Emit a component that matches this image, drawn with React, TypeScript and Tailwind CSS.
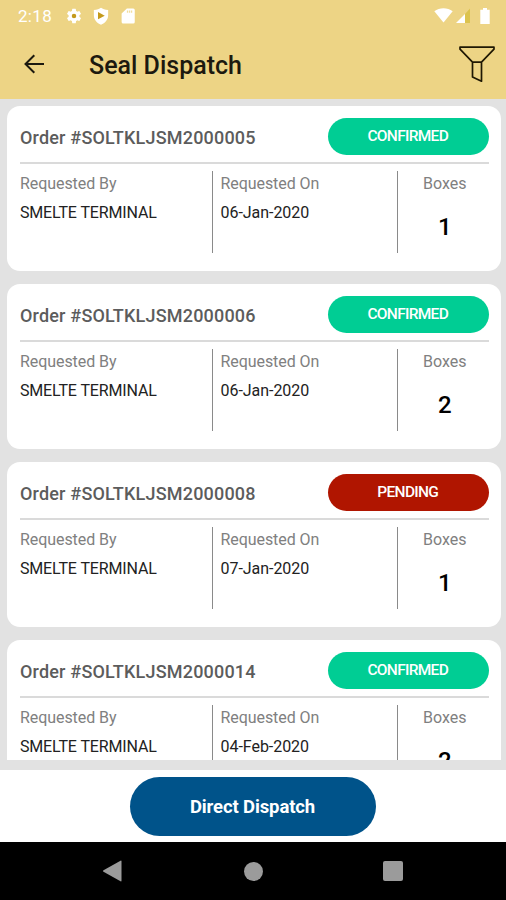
import clsx from "clsx";

type Order = {
  id: string;
  status: "CONFIRMED" | "PENDING";
  by: string;
  date: string;
  boxes: number;
};

const orders: Order[] = [
  { id: "SOLTKLJSM2000005", status: "CONFIRMED", by: "SMELTE TERMINAL", date: "06-Jan-2020", boxes: 1 },
  { id: "SOLTKLJSM2000006", status: "CONFIRMED", by: "SMELTE TERMINAL", date: "06-Jan-2020", boxes: 2 },
  { id: "SOLTKLJSM2000008", status: "PENDING", by: "SMELTE TERMINAL", date: "07-Jan-2020", boxes: 1 },
  { id: "SOLTKLJSM2000014", status: "CONFIRMED", by: "SMELTE TERMINAL", date: "04-Feb-2020", boxes: 2 },
];

const StatusBar = () => {
  return (
    <div className="flex h-[31px] items-center justify-between pl-[18px] pr-[16px] text-white">
      <div className="flex items-center">
        <span className="w-[47px] text-[17px] leading-8 tracking-[0.3px]">2:18</span>
        {/* Settings */}
        <svg className="mr-[9px] h-[18px] w-[18px]" viewBox="0 0 24 24">
          <circle cx="12" cy="12" r="4" fill="#c49a1c" />
          <path
            fill="currentColor"
            d="M19.14 12.94c.04-.3.06-.61.06-.94s-.02-.64-.07-.94l2.03-1.58a.49.49 0 0 0 .12-.61l-1.92-3.32a.49.49 0 0 0-.59-.22l-2.39.96a7 7 0 0 0-1.62-.94l-.36-2.54a.48.48 0 0 0-.48-.41h-3.84a.47.47 0 0 0-.47.41l-.36 2.54c-.59.24-1.13.57-1.62.94l-2.39-.96a.48.48 0 0 0-.59.22L2.74 8.87a.47.47 0 0 0 .12.61l2.03 1.58a6.6 6.6 0 0 0 0 1.88l-2.03 1.58a.49.49 0 0 0-.12.61l1.92 3.32c.12.22.37.29.59.22l2.39-.96c.5.38 1.03.7 1.62.94l.36 2.54c.05.24.24.41.48.41h3.84c.24 0 .44-.17.47-.41l.36-2.54a7 7 0 0 0 1.62-.94l2.39.96c.22.08.47 0 .59-.22l1.92-3.32a.47.47 0 0 0-.12-.61zM12 15a3 3 0 1 1 0-6 3 3 0 0 1 0 6"
          />
        </svg>
        {/* Play protect */}
        <svg className="mr-[9px] h-[18px] w-[18px]" viewBox="0 0 24 24">
          <path fill="currentColor" d="M12 1c2 1.400 5.500 2.500 9.500 3v7c0 6-4 10.500-9.500 12.500C6.500 21.500 2.500 17 2.500 11V4c4-.5 7.500-1.600 9.500-3z" />
          <path fill="#c49a1c" d="M8 6.800v9.400L17 11.500z" />
        </svg>
        {/* SD card */}
        <svg className="h-[18px] w-[18px]" viewBox="0 0 24 24">
          <path fill="currentColor" d="M19 2h-8.500L3.500 8.500V20a2 2 0 0 0 2 2H19a2 2 0 0 0 2-2V4a2 2 0 0 0-2-2z" />
          <path fill="#edd485" fillOpacity=".8" d="M10.500 4.800h1.700v3h-1.700zM13.200 4.800h1.700v3h-1.700zM15.900 4.800h1.700v3h-1.700z" />
        </svg>
      </div>
      <div className="flex items-center">
        <svg className="mr-[3px] h-[15px] w-[19px]" viewBox="0 0 19 15">
          <path fill="currentColor" d="M9.500 14.500.3 3.300C5.500-.7 13.500-.7 18.700 3.300z" />
        </svg>
        <svg className="mr-[9px] h-[15px] w-[15px]" viewBox="0 0 15 15">
          <path fill="#dcc34e" d="M14 .5V15H9V6z" />
          <path fill="currentColor" d="M9 6v9H0z" />
        </svg>
        <svg className="h-[16px] w-[10px]" viewBox="0 0 10 16">
          <path fill="currentColor" d="M3 0h4v1.800h2.700V16H.3V1.800H3z" />
        </svg>
      </div>
    </div>
  );
};

const Header = () => {
  return (
    <header className="h-[99px] shrink-0 bg-[#edd485]">
      <StatusBar />
      <div className="flex h-[66px] items-center pl-[24px] pr-[11px]">
        <svg className="h-[20px] w-[21px] text-[#1c190f]" viewBox="0 0 21 20" fill="none" stroke="currentColor" strokeWidth="2">
          <path d="M20 10H1.800M10.300 1.200 1.500 10l8.800 8.800" />
        </svg>
        <h1 className="ml-[44px] flex-1 pt-[3px] text-[25px] font-medium text-[#1c190f]">Seal Dispatch</h1>
        <svg className="h-[37px] w-[36px]" viewBox="0 0 36 37" fill="none" stroke="#1f1803" strokeWidth="1.700" strokeLinejoin="round">
          <path d="M1 1.200h34v2L22.500 16.200v19L13.500 31V16.200L1 3.200zM13.500 16.200h9" />
        </svg>
      </div>
    </header>
  );
};

const OrderCard = ({ order }: { order: Order }) => {
  return (
    <article className="mb-[12.500px] h-[165.500px] shrink-0 rounded-[13px] bg-white px-[12.500px] pt-[12.500px]">
      <div className="flex h-[45.500px] items-start justify-between border-b-2 border-[#dadada]">
        <h2 className="pt-px text-[18px] font-medium leading-[38px] tracking-[0.2px] text-[#5c5c5c]">Order #{order.id}</h2>
        <span
          className={clsx(
            "h-[37px] w-[160.500px] rounded-full pr-px text-center text-[15.500px] font-medium leading-[37px] tracking-[-0.7px] text-white",
            order.status === "CONFIRMED" ? "bg-[#00cd94]" : "bg-[#b01500]"
          )}
        >
          {order.status}
        </span>
      </div>

      <div className="mt-[7.500px] flex h-[82px] text-[16px] leading-[24px] text-[#222]">
        <div className="w-[193.200px] border-r-[1.500px] border-[#8a8a8a] pt-px">
          <p className="tracking-[-0.05px] text-[#808080]">Requested By</p>
          <p className="mt-[5px] tracking-[-0.12px]">{order.by}</p>
        </div>
        <div className="w-[185px] border-r-[1.500px] border-[#8a8a8a] pl-[7.500px] pt-px">
          <p className="tracking-[-0.08px] text-[#808080]">Requested On</p>
          <p className="mt-[5px] tracking-[-0.05px]">{order.date}</p>
        </div>
        <div className="flex-1 pl-[3px] pt-px text-center">
          <p className="text-[#808080]">Boxes</p>
          <p className="mt-[16px] text-[24px] font-medium leading-[30px] text-black">{order.boxes}</p>
        </div>
      </div>
    </article>
  );
};

const NavBar = () => {
  return (
    <nav className="flex h-[58px] shrink-0 items-center bg-black pl-[102px]">
      <svg className="h-[22px] w-[20px]" viewBox="0 0 20 22">
        <path fill="#9b9b9b" d="M1.500 10.200 18.500.7q1-.5 1 .7v19.200q0 1.200-1 .7L1.500 11.800q-1.200-.8 0-1.600z" />
      </svg>
      <span className="ml-[122px] h-[19px] w-[19px] rounded-full bg-[#9b9b9b]" />
      <span className="ml-[120px] h-[20px] w-[20px] rounded-[2px] bg-[#9b9b9b]" />
    </nav>
  );
};

export default function App() {
  return (
    <div className="flex h-[900px] w-[506px] flex-col overflow-hidden bg-[#e2e2e2] font-['Roboto',sans-serif]">
      <Header />
      <main className="flex h-[661px] shrink-0 flex-col overflow-hidden pl-[7.400px] pr-[5px] pt-[6.500px]">
        {orders.map((order) => (
          <OrderCard key={order.id} order={order} />
        ))}
      </main>
      <footer className="mt-[10px] flex h-[72px] shrink-0 items-start justify-center bg-white pt-[7px]">
        <button className="h-[58.500px] w-[246px] rounded-full bg-[#00538a] pr-px pt-[3px] text-[18.500px] font-bold tracking-[-0.12px] text-white">
          Direct Dispatch
        </button>
      </footer>
      <NavBar />
    </div>
  );
}
